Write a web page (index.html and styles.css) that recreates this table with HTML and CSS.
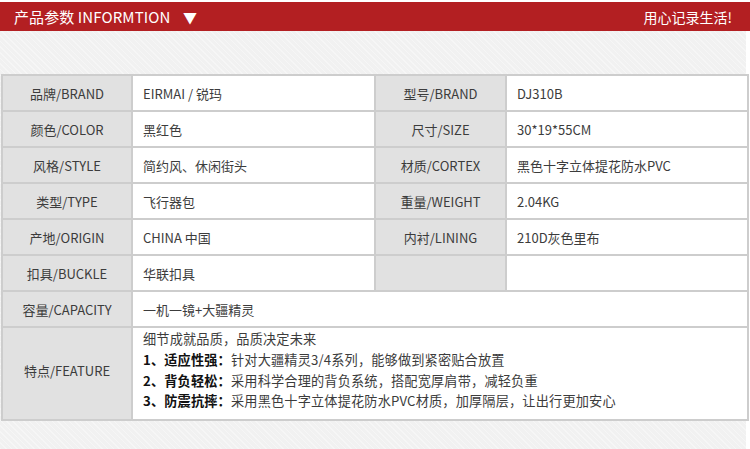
FILE: index.html
```html
<!DOCTYPE html>
<html lang="zh">
<head>
<meta charset="utf-8">
<link rel="stylesheet" href="styles.css">
</head>
<body>
<div class="page">
  <header class="topbar">
    <div class="title">产品参数 INFORMTION <span class="arrow">▼</span></div>
    <div class="slogan">用心记录生活!</div>
  </header>
  <main class="content">
    <table class="params">
      <colgroup>
        <col class="c-label1">
        <col class="c-val1">
        <col class="c-label2">
        <col class="c-val2">
      </colgroup>
      <tr><td class="lab">品牌/BRAND</td><td class="val">EIRMAI / 锐玛</td><td class="lab">型号/BRAND</td><td class="val">DJ310B</td></tr>
      <tr><td class="lab">颜色/COLOR</td><td class="val">黑红色</td><td class="lab">尺寸/SIZE</td><td class="val">30*19*55CM</td></tr>
      <tr><td class="lab">风格/STYLE</td><td class="val">简约风、休闲街头</td><td class="lab">材质/CORTEX</td><td class="val">黑色十字立体提花防水PVC</td></tr>
      <tr><td class="lab">类型/TYPE</td><td class="val">飞行器包</td><td class="lab">重量/WEIGHT</td><td class="val">2.04KG</td></tr>
      <tr><td class="lab">产地/ORIGIN</td><td class="val">CHINA 中国</td><td class="lab">内衬/LINING</td><td class="val">210D灰色里布</td></tr>
      <tr><td class="lab">扣具/BUCKLE</td><td class="val">华联扣具</td><td class="lab"></td><td class="val"></td></tr>
      <tr><td class="lab">容量/CAPACITY</td><td class="val" colspan="3">一机一镜+大疆精灵</td></tr>
      <tr class="feature">
        <td class="lab">特点/FEATURE</td>
        <td class="val" colspan="3">
          <div class="fline">细节成就品质，品质决定未来</div>
          <div class="fline"><b>1、适应性强：</b>针对大疆精灵3/4系列，能够做到紧密贴合放置</div>
          <div class="fline"><b>2、背负轻松：</b>采用科学合理的背负系统，搭配宽厚肩带，减轻负重</div>
          <div class="fline"><b>3、防震抗摔：</b>采用黑色十字立体提花防水PVC材质，加厚隔层，让出行更加安心</div>
        </td>
      </tr>
    </table>
  </main>
</div>
</body>
</html>
```

FILE: styles.css
```css
html, body {
  margin: 0;
  padding: 0;
  background: #ffffff;
}
body {
  font-family: "Noto Sans CJK SC", "Noto Sans", sans-serif;
  color: #3c3c3c;
  width: 750px;
  height: 449px;
  overflow: hidden;
}
.page {
  padding-top: 2px;
}
.topbar {
  height: 29px;
  background: #b31f22;
  color: #ffffff;
  display: flex;
  align-items: center;
  justify-content: space-between;
  padding: 0 18px 0 14px;
}
.title {
  font-size: 15px;
  letter-spacing: 0.1px;
}
.arrow {
  font-size: 14px;
  margin-left: 9px;
}
.slogan {
  font-size: 14px;
}
.content {
  width: 746px;
  height: 418px;
  box-sizing: border-box;
  padding-top: 43px;
  padding-left: 1px;
  background-color: #f1f1f1;
  background-image: repeating-linear-gradient(45deg, rgba(255,255,255,0.35) 0 1px, rgba(0,0,0,0) 1px 4px);
}
.params {
  border-collapse: collapse;
  table-layout: fixed;
  width: 746px;
  font-size: 13px;
}
.c-label1 { width: 130px; }
.c-val1 { width: 243px; }
.c-label2 { width: 131px; }
.c-val2 { width: 242px; }
.params td {
  border: 2px solid #cdcdcd;
  height: 34px;
  padding: 0;
  box-sizing: border-box;
}
.params tr { height: 36px; }
.lab {
  background: #e1e1e1;
  text-align: center;
}
.val {
  background: #ffffff;
  padding-left: 10px !important;
}
.feature td {
  height: 93px;
}
.feature .lab {
  padding-bottom: 6px !important;
}
.feature .val {
  padding-top: 1px !important;
  vertical-align: top;
  font-size: 13.2px;
  letter-spacing: 0.15px;
}
.fline {
  line-height: 20.8px;
}
.fline b {
  font-weight: 700;
  color: #111111;
}
```
